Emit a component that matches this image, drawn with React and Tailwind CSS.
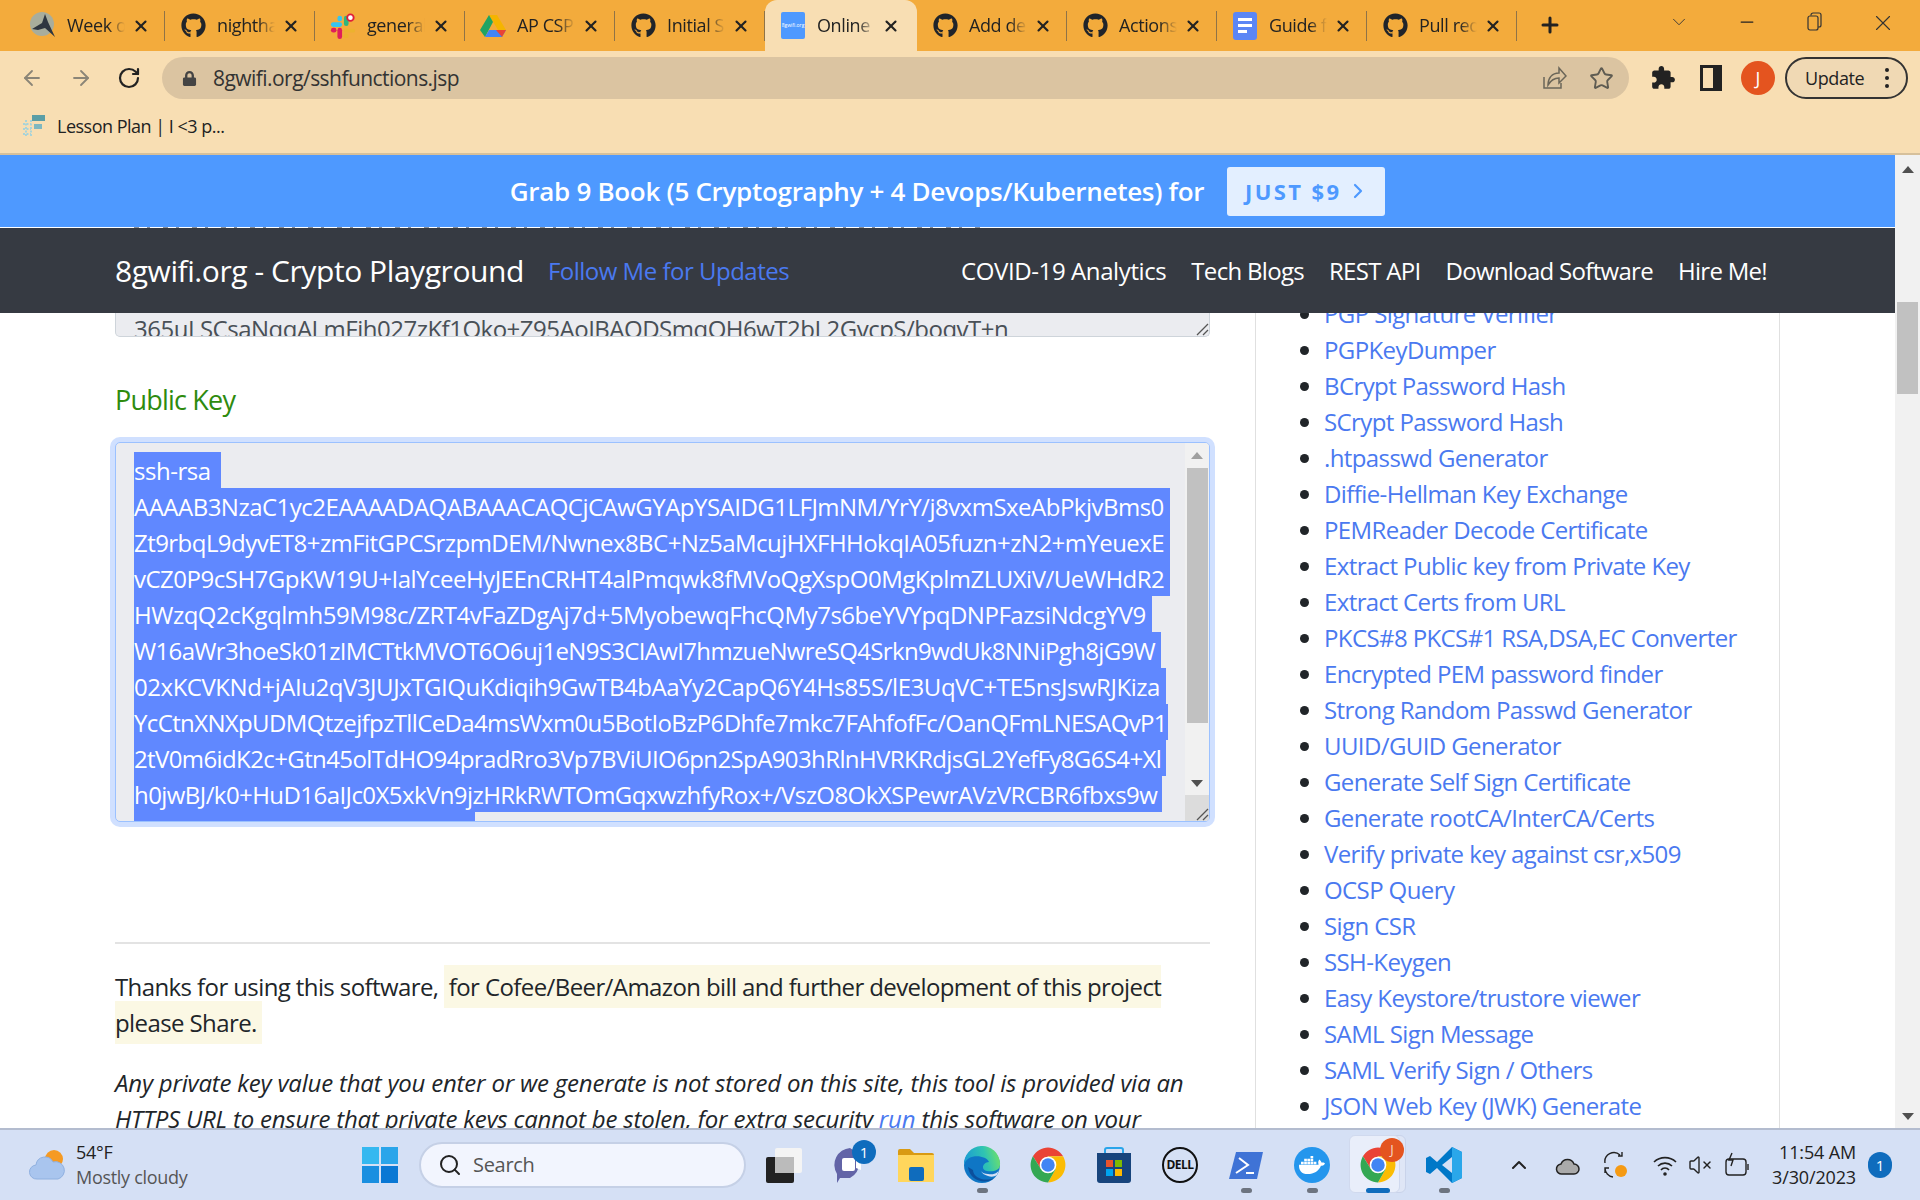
import React from 'react';
import { ArrowLeft, ArrowRight, RotateCw, Star, X, Minus, ChevronDown, ChevronRight, Search, ChevronUp, Plus, VolumeX } from 'lucide-react';
import { FaGithub, FaLock, FaDocker } from 'react-icons/fa';

const tabs = [
  { title: 'Week of', icon: 'bird' },
  { title: 'nighthawk', icon: 'github' },
  { title: 'general', icon: 'slack' },
  { title: 'AP CSP', icon: 'drive' },
  { title: 'Initial S', icon: 'github' },
  { title: 'Online', icon: 'site', active: true },
  { title: 'Add dep', icon: 'github' },
  { title: 'Actions', icon: 'github' },
  { title: 'Guide f', icon: 'doc' },
  { title: 'Pull req', icon: 'github' },
];

// w = selection highlight width, track = nudges each line to the reference's wrap point
const keyLines = [
  { text: 'AAAAB3NzaC1yc2EAAAADAQABAAACAQCjCAwGYApYSAIDG1LFJmNM/YrY/j8vxmSxeAbPkjvBms0', w: 'w-[1036px]', track: 'tracking-[-0.51px]' },
  { text: 'Zt9rbqL9dyvET8+zmFitGPCSrzpmDEM/Nwnex8BC+Nz5aMcujHXFHHokqIA05fuzn+zN2+mYeuexE', w: 'w-[1036px]', track: 'tracking-[-0.55px]' },
  { text: 'vCZ0P9cSH7GpKW19U+IalYceeHyJEEnCRHT4alPmqwk8fMVoQgXspO0MgKplmZLUXiV/UeWHdR2', w: 'w-[1036px]', track: 'tracking-[-0.5px]' },
  { text: 'HWzqQ2cKgqlmh59M98c/ZRT4vFaZDgAj7d+5MyobewqFhcQMy7s6beYVYpqDNPFazsiNdcgYV9', w: 'w-[1018px]', track: 'tracking-[-0.48px]' },
  { text: 'W16aWr3hoeSk01zIMCTtkMVOT6O6uj1eN9S3CIAwI7hmzueNwreSQ4Srkn9wdUk8NNiPgh8jG9W', w: 'w-[1027px]', track: 'tracking-[-0.66px]' },
  { text: '02xKCVKNd+jAIu2qV3JUJxTGIQuKdiqih9GwTB4bAaYy2CapQ6Y4Hs85S/lE3UqVC+TE5nsJswRJKiza', w: 'w-[1032px]', track: 'tracking-[-0.46px]' },
  { text: 'YcCtnXNXpUDMQtzejfpzTllCeDa4msWxm0u5BotIoBzP6Dhfe7mkc7FAhfofFc/OanQFmLNESAQvP1', w: 'w-[1034px]', track: 'tracking-[-0.63px]' },
  { text: '2tV0m6idK2c+Gtn45olTdHO94pradRro3Vp7BViUIO6pn2SpA903hRlnHVRKRdjsGL2YefFy8G6S4+Xl', w: 'w-[1032px]', track: 'tracking-[-0.61px]' },
  { text: 'h0jwBJ/k0+HuD16aIJc0X5xkVn9jzHRkRWTOmGqxwzhfyRox+/VszO8OkXSPewrAVzVRCBR6fbxs9w', w: 'w-[1028px]', track: 'tracking-[-0.57px]' },
];

const links = [
  'PGP Signature Verifier', 'PGPKeyDumper', 'BCrypt Password Hash', 'SCrypt Password Hash', '.htpasswd Generator',
  'Diffie-Hellman Key Exchange', 'PEMReader Decode Certificate', 'Extract Public key from Private Key', 'Extract Certs from URL',
  'PKCS#8 PKCS#1 RSA,DSA,EC Converter', 'Encrypted PEM password finder', 'Strong Random Passwd Generator', 'UUID/GUID Generator',
  'Generate Self Sign Certificate', 'Generate rootCA/InterCA/Certs', 'Verify private key against csr,x509', 'OCSP Query', 'Sign CSR',
  'SSH-Keygen', 'Easy Keystore/trustore viewer', 'SAML Sign Message', 'SAML Verify Sign / Others', 'JSON Web Key (JWK) Generate',
];

function ChromeLogo({ size = 36 }) {
  return (
    <svg width={size} height={size} viewBox="0 0 48 48">
      <path d="M4.95 13A22 22 0 0 1 43.05 13H24L15 29z" fill="#ea4335" />
      <path d="M43.05 13A22 22 0 0 1 24 46L33.5 29.5 24 13z" fill="#fbbc04" />
      <path d="M24 46A22 22 0 0 1 4.95 13L15 29 33.5 29.5z" fill="#34a853" />
      <circle cx="24" cy="24" r="10.5" fill="#fff" />
      <circle cx="24" cy="24" r="8.5" fill="#4285f4" />
    </svg>
  );
}

function TabIcon({ kind }) {
  if (kind === 'github') return <FaGithub className="text-[25px] text-[#20242a]" />;
  if (kind === 'bird') {
    return (
      <svg width="26" height="28" viewBox="0 0 26 28">
        <circle cx="12" cy="12" r="12" fill="#a8ad9c" />
        <path d="M2 17 L12 11 L15 2 L18 10 L25 25 L15 16 L8 18z" fill="#2e3640" />
      </svg>
    );
  }
  if (kind === 'slack') {
    return (
      <svg width="28" height="28" viewBox="0 0 28 28">
        <rect x="1" y="10" width="12" height="5" rx="2.5" fill="#36c5f0" />
        <rect x="8" y="3" width="5" height="6" rx="2.5" fill="#36c5f0" />
        <rect x="15" y="3" width="5" height="11" rx="2.5" fill="#2eb67d" />
        <circle cx="22" cy="5" r="3.5" fill="#fff" stroke="#e01e3a" strokeWidth="2" />
        <rect x="15" y="17" width="12" height="4" rx="2" fill="#ecb22e" />
        <rect x="15" y="22" width="5" height="5" rx="2" fill="#ecb22e" />
        <rect x="8" y="16" width="5" height="12" rx="2.5" fill="#e01e5a" />
        <rect x="1" y="16" width="6" height="5" rx="2.5" fill="#e01e5a" />
      </svg>
    );
  }
  if (kind === 'drive') {
    return (
      <svg width="26" height="24" viewBox="0 0 26 24">
        <path d="M9 1h8l9 15h-8z" fill="#f5b400" />
        <path d="M9 1l4 7-8 15-5-7z" fill="#1fa463" />
        <path d="M5 23l4-7h17l-4 7z" fill="#4285f4" />
        <path d="M16 16h10l-4 7z" fill="#ea4335" />
      </svg>
    );
  }
  if (kind === 'site') {
    return (
      <div className="w-[24px] h-[27px] rounded-[2px] bg-[#4e99ff] flex items-center justify-center text-[5px] text-white">8gwifi.org</div>
    );
  }
  return (
    <div className="w-[24px] h-[28px] rounded-[3px] bg-[#5b86f5] flex flex-col justify-center gap-[3px] px-[5px]">
      <div className="h-[3px] bg-white" />
      <div className="h-[3px] bg-white" />
      <div className="h-[3px] bg-white w-[9px]" />
    </div>
  );
}

function Tab({ tab }) {
  const w = tab.active ? 'w-[152px] bg-[#f8deb3] rounded-t-[12px]' : 'w-[150px]';
  return (
    <div className={`relative h-[51px] flex items-center pl-[15px] ${w}`}>
      <div className="w-[26px] flex justify-center shrink-0"><TabIcon kind={tab.icon} /></div>
      <span className="ml-[11px] w-[58px] overflow-hidden whitespace-nowrap text-[18px] tracking-[-0.4px] text-[#222] [mask-image:linear-gradient(to_right,black_70%,transparent)]">{tab.title}</span>
      <X size={18} strokeWidth={2.8} className="ml-[7px] text-[#222] shrink-0" />
      {!tab.active && <div className="absolute right-0 top-[11px] h-[30px] w-[1px] bg-[#8f7347]" />}
    </div>
  );
}

function TabBar() {
  return (
    <div className="h-[51px] bg-[#f3ab3c] flex items-start pl-[15px]">
      {tabs.map((tab, i) => <Tab key={i} tab={tab} />)}
      <Plus size={24} strokeWidth={3} className="ml-[21px] mt-[13px] text-[#222]" />
      <ChevronDown size={22} strokeWidth={1} className="ml-[106px] mt-[11px] text-[#333]" />
      <Minus size={20} strokeWidth={1.5} className="ml-[47px] mt-[12px] text-[#222]" />
      <svg width="18" height="20" viewBox="0 0 18 20" className="ml-[49px] mt-[12px]" fill="none" stroke="#333" strokeWidth="1.2">
        <rect x="2" y="4" width="10" height="14" rx="2" />
        <path d="M5 3.5V3a2 2 0 0 1 2-2h6a2 2 0 0 1 2 2v10a2 2 0 0 1-2 2h-1" />
      </svg>
      <X size={26} strokeWidth={1} className="ml-[46px] mt-[10px] text-[#333]" />
    </div>
  );
}

function Toolbar() {
  return (
    <div className="h-[51px] pt-[3px] bg-[#f8deb3] flex items-center pl-[8px]">
      <div className="w-[48px] flex justify-center"><ArrowLeft size={24} strokeWidth={1.8} className="text-[#8b8577]" /></div>
      <div className="w-[49px] flex justify-center"><ArrowRight size={24} strokeWidth={1.8} className="text-[#8b8577]" /></div>
      <div className="w-[48px] flex justify-center"><RotateCw size={24} strokeWidth={2.2} className="text-[#222]" /></div>
      <div className="ml-[9px] w-[1467px] h-[42px] rounded-full bg-[#dbc4a1] flex items-center pl-[20px] pr-[15px]">
        <FaLock className="text-[15px] text-[#444]" />
        <span className="ml-[16px] pt-[1px] text-[21px] tracking-[-0.55px] text-[#333]">8gwifi.org/sshfunctions.jsp</span>
        <svg width="26" height="26" viewBox="0 0 26 26" fill="none" stroke="#6b6659" strokeWidth="1.5" className="ml-auto">
          <path d="M3 12v11h17v-5" />
          <path d="M7 20c0-7 4-12 11-12V3l7 8-7 7v-5c-5 0-8 2-11 7z" />
        </svg>
        <Star size={25} strokeWidth={1.8} className="ml-[22px] text-[#5f5c52]" />
      </div>
      <svg width="26" height="26" viewBox="0 0 24 24" className="ml-[21px]" fill="#222">
        <path d="M20.5 11H19V7c0-1.1-.9-2-2-2h-4V3.5C13 2.12 11.88 1 10.5 1S8 2.12 8 3.5V5H4c-1.1 0-1.99.9-1.99 2v3.8H3.5c1.49 0 2.7 1.21 2.7 2.7s-1.21 2.7-2.7 2.7H2V20c0 1.1.9 2 2 2h3.8v-1.5c0-1.49 1.21-2.7 2.7-2.7 1.49 0 2.7 1.21 2.7 2.7V22H17c1.1 0 2-.9 2-2v-4h1.5c1.38 0 2.5-1.12 2.5-2.5S21.88 11 20.5 11z" />
      </svg>
      <svg width="22" height="26" viewBox="0 0 22 26" className="ml-[24px]">
        <rect x="1.5" y="1.5" width="19" height="23" fill="none" stroke="#222" strokeWidth="3" />
        <rect x="13" y="1.5" width="8" height="23" fill="#222" />
      </svg>
      <div className="ml-[19px] w-[34px] h-[34px] rounded-full bg-[#e4541f] flex items-center justify-center text-[18px] text-white">J</div>
      <div className="ml-[10px] w-[123px] h-[42px] rounded-full border-2 border-[#333] bg-[#f0d9b4] flex items-center pl-[18px] text-[18px] tracking-[-0.4px] text-[#222]">
        Update
        <div className="ml-[21px] flex flex-col gap-[4px]">
          <div className="w-[4px] h-[4px] rounded-full bg-[#222]" />
          <div className="w-[4px] h-[4px] rounded-full bg-[#222]" />
          <div className="w-[4px] h-[4px] rounded-full bg-[#222]" />
        </div>
      </div>
    </div>
  );
}

function Bookmarks() {
  return (
    <div className="h-[53px] pb-[3px] bg-[#f8deb3] border-b-2 border-[#d6c09b] flex items-center pl-[22px]">
      <svg width="24" height="24" viewBox="0 0 24 24">
        <rect x="10" y="1" width="13" height="6" fill="#5b9ea6" />
        <rect x="12" y="10" width="8" height="5" fill="#7fb8c0" />
        <path d="M4 6v16M9 6v16M1 10h8M1 15h8M1 20h8" stroke="#a9d3d8" strokeWidth="2" strokeDasharray="2 1.5" />
      </svg>
      <span className="ml-[11px] text-[18px] tracking-[-0.5px] text-[#222]">Lesson Plan | I &lt;3 p...</span>
    </div>
  );
}

function Banner() {
  return (
    <>
      <div className="h-[72px] bg-[#4e99ff] flex items-center justify-center gap-[23px]">
        <span className="pt-[1px] text-[26px] font-semibold tracking-[-0.3px] text-white">Grab 9 Book (5 Cryptography + 4 Devops/Kubernetes) for</span>
        <div className="w-[158px] h-[49px] rounded-[3px] bg-[#e3efff] flex items-center justify-center gap-[5px] pl-[3px] text-[22px] font-bold tracking-[2.4px] text-[#4e99ff]">
          JUST $9
          <ChevronRight size={24} strokeWidth={2.2} />
        </div>
      </div>
      {/* page text peeking through between the two fixed bars */}
      <div className="h-[1px] bg-white pl-[134px] pr-[910px]">
        <div className="h-[1px] bg-[repeating-linear-gradient(90deg,#8a8f98_0_5px,transparent_5px_13px,#8a8f98_13px_16px,transparent_16px_29px)]" />
      </div>
    </>
  );
}

function Nav() {
  return (
    <div className="h-[85px] shrink-0 bg-[#363a42] flex items-center pl-[115px] pr-[128px] text-[24px] tracking-[-0.7px] text-white">
      <span className="text-[30px] tracking-[-0.43px]">8gwifi.org - Crypto Playground</span>
      <span className="ml-[24px] text-[#4a79f0] tracking-[-0.5px]">Follow Me for Updates</span>
      <div className="ml-auto flex gap-[25px]">
        <span className="tracking-[-0.4px]">COVID-19 Analytics</span>
        <span>Tech Blogs</span>
        <span>REST API</span>
        <span>Download Software</span>
        <span>Hire Me!</span>
      </div>
    </div>
  );
}

function TextareaScrollbar() {
  return (
    <div className="w-[24px] shrink-0 bg-[#f1f1f1] flex flex-col items-center">
      <div className="h-[25px] flex items-center justify-center w-full">
        <div className="w-0 h-0 border-x-[6px] border-x-transparent border-b-[7px] border-b-[#a0a0a0]" />
      </div>
      <div className="w-[21px] h-[255px] bg-[#c1c1c1]" />
      <div className="h-[72px] w-full flex items-center justify-center pt-[48px]">
        <div className="w-0 h-0 border-x-[6px] border-x-transparent border-t-[7px] border-t-[#505050]" />
      </div>
      <div className="flex-1 w-full bg-[#dcdcdc] flex items-end justify-end">
        <Grip />
      </div>
    </div>
  );
}

function Grip() {
  return (
    <svg width="14" height="14" viewBox="0 0 14 14" stroke="#555" strokeWidth="1.3">
      <path d="M2 13 L13 2 M8 13 L13 8" />
    </svg>
  );
}

function PublicKeyBox() {
  return (
    <div className="mt-[24px] h-[380px] rounded-[5px] border border-[#9bc1ff] bg-[#ebecf0] ring-[5px] ring-[#d0e0ff] flex overflow-hidden text-white">
      <div className="flex-1 min-w-0 pl-[18px] pt-[9px] overflow-hidden">
        <div className="h-[36px] w-[87px] bg-[#6088ff] leading-[38px] tracking-[-0.48px]">ssh-rsa</div>
        {keyLines.map((line) => (
          <div key={line.text} className={`h-[36px] leading-[38px] bg-[#6088ff] whitespace-nowrap overflow-hidden ${line.w} ${line.track}`}>{line.text}</div>
        ))}
        <div className="h-[36px] w-[341px] bg-[#6088ff]" />
      </div>
      <TextareaScrollbar />
    </div>
  );
}

function MainColumn() {
  return (
    <div className="ml-[115px] w-[1095px] shrink-0">
      <div className="h-[24px] rounded-b-[5px] border-b border-x border-[#ced4da] bg-[#ebecf0] pl-[18px] flex justify-between overflow-hidden text-[#495057] tracking-[-0.5px]">
        <span className="leading-[36px] whitespace-nowrap -mt-[2px]">365uLSCsaNqqALmFih027zKf1Qko+Z95AoIBAQDSmqOH6wT2bL2GvcpS/boqvT+n</span>
        <div className="self-end"><Grip /></div>
      </div>
      <div className="mt-[45px] h-[36px] leading-[36px] text-[27px] text-[#2e8b0e] tracking-[-0.8px]">Public Key</div>
      <PublicKeyBox />
      <div className="mt-[120px] h-[2px] bg-[#e3e3e3]" />
      <p className="mt-[25px] leading-[36px] text-[#212529] tracking-[-0.6px]">
        Thanks for using this software, <span className="bg-[#fbf8e4] p-[4.8px]">for Cofee/Beer/Amazon bill and further development of this project please Share.</span>
      </p>
      <p className="mt-[24px] leading-[36px] italic text-[#212529] tracking-[-0.2px]">
        Any private key value that you enter or we generate is not stored on this site, this tool is provided via an<br />HTTPS URL to ensure that private keys cannot be stolen, for extra security <span className="text-[#4a79f0]">run</span> this software on your
      </p>
    </div>
  );
}

function Sidebar() {
  return (
    <div className="ml-[45px] w-[525px] shrink-0 border-x border-[#e0e0e0] overflow-hidden">
      <ul className="-mt-[17px] pl-[68px] list-disc text-[#4a79f0] leading-[36px] tracking-[-0.6px]">
        {links.map((l) => (
          <li key={l} className="marker:text-[#212529]">{l}</li>
        ))}
      </ul>
    </div>
  );
}

function PageScrollbar() {
  return (
    <div className="w-[25px] shrink-0 bg-[#f1f1f1] flex flex-col items-center">
      <div className="h-[24px] mt-[2px] flex items-center justify-center">
        <div className="w-0 h-0 border-x-[6px] border-x-transparent border-b-[7px] border-b-[#505050]" />
      </div>
      <div className="mt-[121px] w-[21px] h-[92px] bg-[#c1c1c1]" />
      <div className="mt-auto h-[24px] flex items-center justify-center">
        <div className="w-0 h-0 border-x-[6px] border-x-transparent border-t-[7px] border-t-[#505050]" />
      </div>
    </div>
  );
}

function Slot({ children, dot, active }) {
  return (
    <div className="relative w-[66px] h-[70px] flex items-center justify-center">
      {active && (
        <>
          <div className="absolute left-[9px] top-[5px] w-[52px] h-[58px] bg-[#dfe6f6] rounded-[6px] border border-[#c9d3ea]" />
          <div className="absolute left-[4px] top-[5px] w-[51px] h-[58px] bg-[#e9eefa] rounded-[6px] border border-[#d0d9ee]" />
        </>
      )}
      {children}
      {dot && <div className="absolute bottom-[7px] w-[11px] h-[5px] rounded-full bg-[#6d7480]" />}
      {active && <div className="absolute bottom-[7px] w-[24px] h-[5px] rounded-full bg-[#0f6cbd]" />}
    </div>
  );
}

function Taskbar() {
  return (
    <div className="h-[72px] shrink-0 bg-[#d5e0f5] border-t-2 border-[#b3bccf] flex items-center">
      <svg width="36" height="32" viewBox="0 0 36 32" className="ml-[29px] shrink-0">
        <circle cx="25" cy="10" r="9" fill="#f59a23" />
        <path d="M8 30a7 7 0 0 1-1-14 9 9 0 0 1 17-3 8 8 0 0 1 5 17z" fill="#a9c5ee" stroke="#8fb0e0" />
      </svg>
      <div className="ml-[11px] w-[120px] shrink-0 text-[18px] leading-[25px] tracking-[-0.3px]">
        <div className="text-[#222]">54°F</div>
        <div className="text-[#555]">Mostly cloudy</div>
      </div>
      <div className="ml-[151px] w-[66px] flex justify-center shrink-0">
        <div className="grid grid-cols-2 gap-[2px] w-[36px] h-[36px]">
          <div className="bg-[#35b8f0]" />
          <div className="bg-[#2aa5ea]" />
          <div className="bg-[#1a8fe0]" />
          <div className="bg-[#0a78d4]" />
        </div>
      </div>
      <div className="ml-[6px] w-[327px] h-[46px] rounded-full bg-[#f2f5fe] border-2 border-[#c5d0e6] flex items-center pl-[17px] shrink-0">
        <Search size={24} strokeWidth={2} className="text-[#222]" />
        <span className="ml-[11px] text-[20px] tracking-[-0.3px] text-[#555]">Search</span>
      </div>
      <div className="ml-[5px] flex shrink-0">
        <Slot>
          <svg width="36" height="36" viewBox="0 0 36 36">
            <rect x="9" y="1" width="27" height="25" rx="2" fill="#f4f4f4" />
            <rect x="0" y="10" width="28" height="26" rx="2" fill="#222" />
            <rect x="9" y="10" width="19" height="16" fill="#bbb" />
          </svg>
        </Slot>
        <Slot>
          <div className="relative">
            <svg width="36" height="38" viewBox="0 0 36 38">
              <path d="M18 2a17 17 0 0 1 0 30H8l-3 5v-9A17 17 0 0 1 18 2z" fill="#6264a7" />
              <rect x="10" y="12" width="13" height="13" rx="2" fill="#fff" />
              <path d="M24 15l5-2v11l-5-2z" fill="#fff" />
            </svg>
            <div className="absolute -top-[6px] -right-[8px] w-[24px] h-[24px] rounded-full bg-[#0f6cbd] flex items-center justify-center text-[15px] text-white">1</div>
          </div>
        </Slot>
        <Slot>
          <svg width="38" height="36" viewBox="0 0 38 36">
            <path d="M1 4a2 2 0 0 1 2-2h10l4 4h18a2 2 0 0 1 2 2v4H1z" fill="#d99a12" />
            <rect x="1" y="8" width="36" height="27" fill="#ffd65c" />
            <rect x="12" y="20" width="15" height="14" rx="2" fill="#0f6cbd" />
          </svg>
        </Slot>
        <Slot dot>
          <svg width="38" height="38" viewBox="0 0 38 38">
            <defs>
              <linearGradient id="edgeTop" x1="0" y1="0.6" x2="1" y2="0.4">
                <stop offset="0" stopColor="#1a9ad6" />
                <stop offset="0.6" stopColor="#2fc4b2" />
                <stop offset="1" stopColor="#6fe06a" />
              </linearGradient>
            </defs>
            <circle cx="19" cy="19" r="18" fill="#0f76c5" />
            <path d="M1 19a18 18 0 0 1 36-2c1 8-8 9-13 8-7-1-4-9 2-9-3-7-22-9-25 3z" fill="url(#edgeTop)" />
            <path d="M37 19c0 3-2 8-3 10-3 2-6 2-9 1-4-1-6-3-7-5 1 2 4 3 7 3 5 1 12 0 12-9z" fill="#d5e0f5" />
            <path d="M10 24c0 8 12 12 21 8-6 6-24 5-26-11z" fill="#0c4f9c" />
          </svg>
        </Slot>
        <Slot><ChromeLogo size={38} /></Slot>
        <Slot>
          <svg width="36" height="38" viewBox="0 0 36 38">
            <path d="M9 9V4a2 2 0 0 1 2-2h14a2 2 0 0 1 2 2v5" fill="none" stroke="#2aa5ea" strokeWidth="2" />
            <path d="M1 7h34v27a3 3 0 0 1-3 3H4a3 3 0 0 1-3-3z" fill="#17447c" />
            <rect x="10" y="14" width="7" height="7" fill="#e8532b" />
            <rect x="19" y="14" width="7" height="7" fill="#7fba00" />
            <rect x="10" y="23" width="7" height="7" fill="#00a4ef" />
            <rect x="19" y="23" width="7" height="7" fill="#ffb900" />
          </svg>
        </Slot>
        <Slot>
          <div className="w-[36px] h-[36px] rounded-full border-2 border-[#111] flex items-center justify-center text-[12px] font-bold tracking-[-0.5px] text-[#111]">DELL</div>
        </Slot>
        <Slot dot>
          <svg width="34" height="27" viewBox="0 0 34 27">
            <path d="M7 0h27l-6 27H0z" fill="#3f73d6" />
            <path d="M10 6l9 7-12 8M17 21h8" fill="none" stroke="#fff" strokeWidth="2" />
          </svg>
        </Slot>
        <Slot dot>
          <div className="w-[36px] h-[36px] rounded-full bg-[#2496ed] flex items-center justify-center">
            <FaDocker className="text-[26px] text-white" />
          </div>
        </Slot>
        <Slot active>
          <div className="relative">
            <ChromeLogo size={38} />
            <div className="absolute -top-[8px] -right-[7px] w-[24px] h-[24px] rounded-full bg-[#e4541f] flex items-center justify-center text-[13px] text-[#f8d8c8]">J</div>
          </div>
        </Slot>
        <Slot dot>
          <svg width="38" height="38" viewBox="0 0 38 38">
            <path d="M27 1l10 5v26l-10 5L12 22l-7 6-4-2V12l4-2 7 6z" fill="#0078c8" />
            <path d="M27 1l10 5v26l-10 5z" fill="#2aa7ea" />
            <path d="M27 11L17 19l10 8z" fill="#d5e0f5" />
          </svg>
        </Slot>
      </div>
      <ChevronUp size={24} strokeWidth={2} className="ml-[30px] text-[#222] shrink-0" />
      <svg width="26" height="22" viewBox="0 0 26 22" className="ml-[24px] shrink-0">
        <path d="M7 20a5 5 0 0 1-1-10 7 7 0 0 1 13 0 5 5 0 0 1 0 10z" fill="#aaa" stroke="#222" strokeWidth="1.5" />
      </svg>
      <svg width="26" height="28" viewBox="0 0 26 28" className="ml-[22px] shrink-0" fill="none" stroke="#222" strokeWidth="1.4">
        <path d="M2 12a9 9 0 0 1 15-8M19 1v4h-4M2 17a9 9 0 0 0 8 9M2 22v-5h4" />
        <circle cx="18" cy="20" r="6" fill="#f59a13" stroke="none" />
      </svg>
      <svg width="26" height="24" viewBox="0 0 26 24" className="ml-[23px] shrink-0" fill="none" stroke="#222" strokeWidth="1.6">
        <path d="M2 9a16 16 0 0 1 22 0M6 13a10 10 0 0 1 14 0M9 17a5 5 0 0 1 8 0" />
        <circle cx="13" cy="21" r="1" fill="#222" />
      </svg>
      <VolumeX size={24} strokeWidth={1.4} className="ml-[10px] text-[#222] shrink-0" />
      <svg width="26" height="26" viewBox="0 0 26 26" className="ml-[12px] shrink-0" fill="none" stroke="#222" strokeWidth="1.4">
        <rect x="2" y="7" width="20" height="16" rx="3" />
        <path d="M24 12v6" />
        <path d="M8 1l-3 7h4l-2 6" />
      </svg>
      <div className="ml-[16px] w-[90px] text-right text-[18px] leading-[25px] tracking-[-0.15px] text-[#222] shrink-0">
        <div>11:54 AM</div>
        <div>3/30/2023</div>
      </div>
      <div className="ml-[12px] w-[24px] h-[26px] rounded-full bg-[#0f6cbd] flex items-center justify-center text-[15px] text-white shrink-0">1</div>
    </div>
  );
}

export default function App() {
  return (
    <div className="w-[1920px] h-[1200px] overflow-hidden flex flex-col bg-white text-[24px] [font-family:'Open_Sans',sans-serif]">
      <TabBar />
      <Toolbar />
      <Bookmarks />
      <div className="flex-1 min-h-0 flex">
        <div className="flex-1 min-w-0 flex flex-col">
          <Banner />
          <Nav />
          <div className="flex-1 min-h-0 flex overflow-hidden">
            <MainColumn />
            <Sidebar />
          </div>
        </div>
        <PageScrollbar />
      </div>
      <Taskbar />
    </div>
  );
}
